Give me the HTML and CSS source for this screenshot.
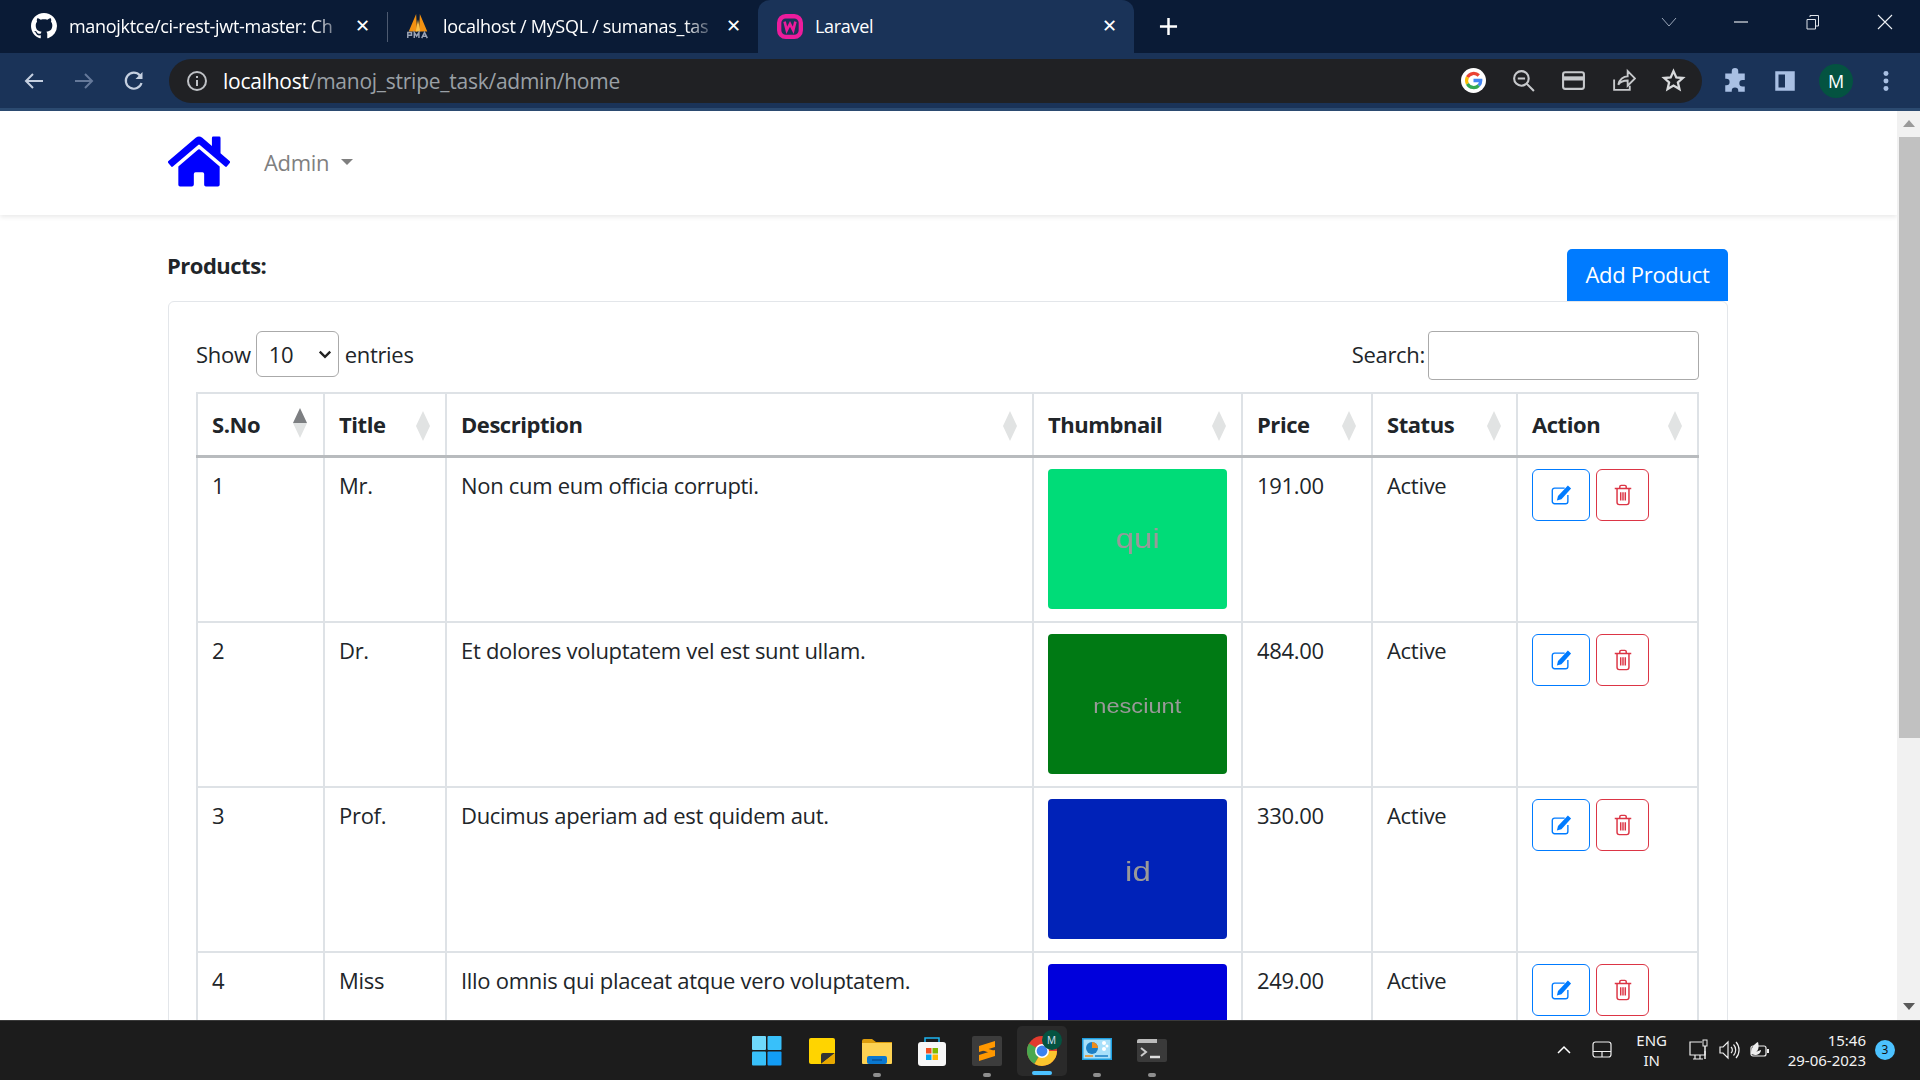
FILE: index.html
```html
<!DOCTYPE html>
<html lang="en">
<head>
    <meta charset="UTF-8">
    <title>Laravel</title>
    <link rel="stylesheet" href="styles.css">
</head>
<body>
<div class="screen">
    <!-- browser chrome -->
    <div class="tabstrip">
        <div class="tab">
            <svg class="tab-icon" viewBox="0 0 16 16"><path fill="#fff" d="M8 0C3.58 0 0 3.58 0 8c0 3.54 2.29 6.53 5.47 7.59.4.07.55-.17.55-.38 0-.19-.01-.82-.01-1.49-2.01.37-2.53-.49-2.69-.94-.09-.23-.48-.94-.82-1.13-.28-.15-.68-.52-.01-.53.63-.01 1.08.58 1.23.82.72 1.21 1.87.87 2.33.66.07-.52.28-.87.51-1.07-1.78-.2-3.64-.89-3.64-3.95 0-.87.31-1.59.82-2.15-.08-.2-.36-1.02.08-2.12 0 0 .67-.21 2.2.82.64-.18 1.32-.27 2-.27s1.36.09 2 .27c1.53-1.04 2.2-.82 2.2-.82.44 1.1.16 1.92.08 2.12.51.56.82 1.27.82 2.15 0 3.07-1.87 3.75-3.65 3.95.29.25.54.73.54 1.48 0 1.07-.01 1.93-.01 2.2 0 .21.15.46.55.38A8.01 8.01 0 0 0 16 8c0-4.42-3.58-8-8-8z"/></svg>
            <span class="tab-title">manojktce/ci-rest-jwt-master: Ch</span>
            <span class="tab-close">&#10005;</span>
        </div>
        <div class="tab tab-second">
            <svg class="tab-icon" viewBox="0 0 26 28"><path fill="#f29111" d="M3 20 11 1l1 19zM14 20 15 1l8 19z"/><path fill="#f8c04a" d="M10.500 20 13 7l2.500 13z"/><path fill="none" stroke="#9aa3b5" stroke-width="1.600" d="M2 27v-6h4v3H2M9 27v-6l2.500 4 2.500-4v6M17 27l3-6 3 6M18 25h4"/></svg>
            <span class="tab-title">localhost / MySQL / sumanas_tas</span>
            <span class="tab-close">&#10005;</span>
        </div>
        <div class="tab tab-active">
            <svg class="tab-icon" viewBox="0 0 24 24"><rect x="2" y="3" width="20" height="19" rx="6" fill="none" stroke="#ec1c9c" stroke-width="4"/><path fill="none" stroke="#ec1c9c" stroke-width="2.400" d="M7 8l2 8 3-6 3 6 2-8"/></svg>
            <span class="tab-title">Laravel</span>
            <span class="tab-close">&#10005;</span>
        </div>
        <svg class="new-tab" viewBox="0 0 20 20"><path stroke="#fff" stroke-width="2.600" d="M10 1v18M1 10h18"/></svg>
        <div class="win-controls">
            <svg viewBox="0 0 16 16"><path fill="none" stroke="#9aa6b8" d="M1 4l7 8 7-8"/></svg>
            <svg viewBox="0 0 16 16"><path stroke="#dfe4ea" stroke-width="1.200" d="M1 8h14"/></svg>
            <svg viewBox="0 0 16 16"><path fill="none" stroke="#dfe4ea" d="M2 5.500h8.500v9.500h-8.500zM5 3V1.500h8.500V12H11"/></svg>
            <svg viewBox="0 0 16 16"><path stroke="#eef1f5" stroke-width="1.100" d="M1 1l14 14M15 1 1 15"/></svg>
        </div>
    </div>
    <div class="toolbar">
        <div class="nav-buttons">
            <svg viewBox="0 0 24 24"><path fill="none" stroke="#c5d0e0" stroke-width="2" d="M21 12H4M11 5l-7 7 7 7"/></svg>
            <svg viewBox="0 0 24 24"><path fill="none" stroke="#65799a" stroke-width="2" d="M3 12h17M13 5l7 7-7 7"/></svg>
            <svg viewBox="0 0 24 24"><path fill="none" stroke="#c5d0e0" stroke-width="2.200" d="M19.500 14a8 8 0 1 1-1.600-7.500"/><path fill="#c5d0e0" d="M20.500 3v7h-7z"/></svg>
        </div>
        <div class="omnibox">
            <svg class="info-icon" viewBox="0 0 22 22"><circle cx="11" cy="11" r="9" fill="none" stroke="#bfc2c6" stroke-width="2"/><path stroke="#bfc2c6" stroke-width="2" d="M11 10v6M11 6v2"/></svg>
            <span class="url"><b>localhost</b>/manoj_stripe_task/admin/home</span>
            <div class="omni-actions">
                <svg viewBox="0 0 26 26"><circle cx="13" cy="13" r="13" fill="#fff"/><path fill="none" stroke="#ea4335" stroke-width="3.400" d="M6.700 9.500A7.500 7.500 0 0 1 18.500 7.800"/><path fill="none" stroke="#fbbc05" stroke-width="3.400" d="M6.700 9.500a7.500 7.500 0 0 0 0 7"/><path fill="none" stroke="#34a853" stroke-width="3.400" d="M6.700 16.500a7.500 7.500 0 0 0 11.800 1.700"/><path fill="none" stroke="#4285f4" stroke-width="3.400" d="M18.500 18.200A7.500 7.500 0 0 0 20.500 13H13"/></svg>
                <svg viewBox="0 0 24 24"><circle cx="10" cy="10" r="7" fill="none" stroke="#c7c9cc" stroke-width="2"/><path stroke="#c7c9cc" stroke-width="2" d="M15 15l7 7M6.500 10h7"/></svg>
                <svg viewBox="0 0 24 24"><rect x="2" y="4" width="20" height="16" rx="2" fill="none" stroke="#c7c9cc" stroke-width="2"/><path fill="#c7c9cc" d="M2 8h20v4H2z"/></svg>
                <svg viewBox="0 0 24 24"><path fill="none" stroke="#c7c9cc" stroke-width="1.800" d="M3 11v10h15v-4M7 16c1-5 5-8 9-8V3l7 7-7 7v-5c-4 0-7 1-9 4z"/></svg>
                <svg viewBox="0 0 24 24"><path fill="none" stroke="#d8dadc" stroke-width="2.200" d="M12 3l2.700 6 6.300.6-4.800 4.200 1.500 6.400L12 16.800 6.300 20.200l1.500-6.400L3 9.600 9.300 9z"/></svg>
            </div>
        </div>
        <div class="toolbar-actions">
            <svg viewBox="0 0 24 24"><path fill="#a9c0e3" d="M9 3a3 3 0 0 1 6 0v2h6v6h-2a3 3 0 0 0 0 6h2v5h-6v-1a3 3 0 0 0-6 0v1H3v-6h1a3 3 0 0 0 0-6H3V5h6z"/></svg>
            <svg viewBox="0 0 24 24"><path fill="#a9c0e3" fill-rule="evenodd" d="M3 3h18v18H3zM6 6v12h6V6z"/></svg>
            <span class="avatar">M</span>
            <svg viewBox="0 0 24 24"><g fill="#a9c0e3"><circle cx="12" cy="5" r="2.300"/><circle cx="12" cy="12" r="2.300"/><circle cx="12" cy="19" r="2.300"/></g></svg>
        </div>
    </div>

    <div class="viewport">
        <div class="content">
            <nav class="navbar">
                <svg class="home-icon" viewBox="0 0 576 512" preserveAspectRatio="none"><path fill="#0000ff" d="M280.400 148.300 96 300.100V464a16 16 0 0 0 16 16l112.100-.3a16 16 0 0 0 15.900-16V368a16 16 0 0 1 16-16h64a16 16 0 0 1 16 16v95.600a16 16 0 0 0 16 16.100L464 480a16 16 0 0 0 16-16V300L295.700 148.300a12.200 12.200 0 0 0-15.300 0zM571.600 251.500 488 182.600V44.100a12 12 0 0 0-12-12h-56a12 12 0 0 0-12 12v72.600L318.500 43a48 48 0 0 0-61 0L4.300 251.500a12 12 0 0 0-1.600 16.900l25.500 31A12 12 0 0 0 45.200 301l235.200-193.700a12.200 12.200 0 0 1 15.300 0L530.900 301a12 12 0 0 0 16.900-1.600l25.500-31a12 12 0 0 0-1.700-16.900z"/></svg>
                <span class="nav-link">Admin<i class="caret"></i></span>
            </nav>
            <main class="container">
                <div class="page-head">
                    <h1>Products:</h1>
                    <button class="btn-add">Add Product</button>
                </div>
                <div class="card">
                    <div class="table-controls">
                        <label>Show
                            <span class="fake-select">10
                                <svg viewBox="0 0 12 12"><path fill="none" stroke="#222" stroke-width="2" d="M1.500 4 6 8.500 10.500 4"/></svg>
                            </span>
                            entries</label>
                        <label>Search:<span class="fake-input"></span></label>
                    </div>
                    <table class="products">
                        <colgroup>
                            <col class="c-no"><col class="c-title"><col class="c-desc"><col class="c-thumb"><col class="c-price"><col class="c-status"><col class="c-action">
                        </colgroup>
                        <thead>
                            <tr>
                                <th class="sort-asc">S.No</th>
                                <th>Title</th>
                                <th>Description</th>
                                <th>Thumbnail</th>
                                <th>Price</th>
                                <th>Status</th>
                                <th>Action</th>
                            </tr>
                        </thead>
                        <tbody>
                            <tr>
                                <td>1</td><td>Mr.</td><td>Non cum eum officia corrupti.</td>
                                <td><div class="thumb thumb-green"><span class="size-md">qui</span></div></td>
                                <td>191.00</td><td>Active</td>
                                <td class="actions">
                                    <button class="icon-btn btn-edit"><svg viewBox="0 0 24 24"><use href="#ico-edit"/></svg></button>
                                    <button class="icon-btn btn-del"><svg viewBox="0 0 24 24"><use href="#ico-trash"/></svg></button>
                                </td>
                            </tr>
                            <tr>
                                <td>2</td><td>Dr.</td><td>Et dolores voluptatem vel est sunt ullam.</td>
                                <td><div class="thumb thumb-dkgreen"><span>nesciunt</span></div></td>
                                <td>484.00</td><td>Active</td>
                                <td class="actions">
                                    <button class="icon-btn btn-edit"><svg viewBox="0 0 24 24"><use href="#ico-edit"/></svg></button>
                                    <button class="icon-btn btn-del"><svg viewBox="0 0 24 24"><use href="#ico-trash"/></svg></button>
                                </td>
                            </tr>
                            <tr>
                                <td>3</td><td>Prof.</td><td>Ducimus aperiam ad est quidem aut.</td>
                                <td><div class="thumb thumb-blue"><span class="size-md">id</span></div></td>
                                <td>330.00</td><td>Active</td>
                                <td class="actions">
                                    <button class="icon-btn btn-edit"><svg viewBox="0 0 24 24"><use href="#ico-edit"/></svg></button>
                                    <button class="icon-btn btn-del"><svg viewBox="0 0 24 24"><use href="#ico-trash"/></svg></button>
                                </td>
                            </tr>
                            <tr>
                                <td>4</td><td>Miss</td><td>Illo omnis qui placeat atque vero voluptatem.</td>
                                <td><div class="thumb thumb-pure"></div></td>
                                <td>249.00</td><td>Active</td>
                                <td class="actions">
                                    <button class="icon-btn btn-edit"><svg viewBox="0 0 24 24"><use href="#ico-edit"/></svg></button>
                                    <button class="icon-btn btn-del"><svg viewBox="0 0 24 24"><use href="#ico-trash"/></svg></button>
                                </td>
                            </tr>
                        </tbody>
                    </table>
                </div>
            </main>
        </div>
        <div class="scrollbar">
            <span class="arrow-up"></span>
            <div class="scroll-track"><div class="scroll-thumb"></div></div>
            <span class="arrow-down"></span>
        </div>
    </div>

    <!-- windows taskbar -->
    <footer class="taskbar">
        <div class="task-icons">
            <span class="task-item">
                <svg viewBox="0 0 30 30"><g fill="#3cc2f5"><rect x="0" y="0" width="14" height="14" rx="1" fill="#6fd9fb"/><rect x="15.500" y="0" width="14" height="14" rx="1" fill="#38c0fa"/><rect x="0" y="15.500" width="14" height="14" rx="1" fill="#38c0fa"/><rect x="15.500" y="15.500" width="14" height="14" rx="1" fill="#129cf5"/></g></svg>
            </span>
            <span class="task-item">
                <svg viewBox="0 0 30 30"><rect x="2" y="2" width="26" height="26" rx="2" fill="#ffd400"/><path fill="#333" d="M14 28V19a2 2 0 0 1 2-2h12z"/><path fill="#e8a800" d="M28 17v9a2 2 0 0 1-2 2H14z"/></svg>
            </span>
            <span class="task-item running">
                <svg viewBox="0 0 30 30"><path fill="#dc9c0c" d="M0 5a2 2 0 0 1 2-2h8l4 3h16v4H0z"/><path fill="#fdd253" d="M0 7h30v20a1 1 0 0 1-1 1H1a1 1 0 0 1-1-1z"/><rect x="5" y="20" width="20" height="8" rx="2" fill="#0a78d0"/><path stroke="#063f7c" d="M10 24h10"/></svg>
            </span>
            <span class="task-item">
                <svg viewBox="0 0 30 30"><path fill="none" stroke="#1db4f0" stroke-width="1.500" d="M8 6V2h14v4"/><rect x="1" y="6" width="28" height="24" rx="3" fill="#f7f7f7"/><rect x="9" y="12" width="5.500" height="5.500" fill="#f25022"/><rect x="15.500" y="12" width="5.500" height="5.500" fill="#7fba00"/><rect x="9" y="18.500" width="5.500" height="5.500" fill="#00a4ef"/><rect x="15.500" y="18.500" width="5.500" height="5.500" fill="#ffb900"/></svg>
            </span>
            <span class="task-item running">
                <svg viewBox="0 0 30 30"><rect width="30" height="30" rx="2" fill="#3c3c3c"/><path fill="#ff9800" d="M23 5v6L7 16v-6zM23 14v6L7 25v-6z"/><path fill="#ff9800" d="M7 10l16 5-5 2-11-4z"/></svg>
            </span>
            <span class="task-item chrome-item">
                <svg viewBox="0 0 30 30"><circle cx="15" cy="15" r="15" fill="#e33b2e"/><path fill="#4aa84f" d="M15 15 7.500 28A15 15 0 0 1 2 7.500z"/><path fill="#fbc52d" d="M15 15h15a15 15 0 0 1-15 15 15 15 0 0 1-7.500-2z"/><circle cx="15" cy="15" r="7" fill="#fff"/><circle cx="15" cy="15" r="5.400" fill="#3b82f0"/></svg>
                <span class="chrome-badge">M</span>
            </span>
            <span class="task-item running">
                <svg viewBox="0 0 30 30"><rect y="2" width="30" height="22" fill="#1f9fe0"/><rect x="1.500" y="3.500" width="27" height="19" fill="#a8e0fa"/><circle cx="10" cy="12" r="6" fill="#1d7fc4"/><path fill="#f08c1a" d="M10 12V6a6 6 0 0 1 6 6z"/><g fill="#fff"><circle cx="22" cy="7" r="2"/><circle cx="22" cy="13" r="2"/><circle cx="25" cy="10" r="1.500"/></g><path stroke="#f08c1a" stroke-width="1.500" d="M3 20h8"/><path stroke="#1d7fc4" stroke-width="1.500" d="M13 20h13"/></svg>
            </span>
            <span class="task-item running">
                <svg viewBox="0 0 30 30"><rect y="3" width="30" height="23" rx="2" fill="#3a3a3a"/><path fill="#bbb" d="M2 3h18v4H0V5a2 2 0 0 1 2-2z"/><path fill="none" stroke="#ccc" stroke-width="2" d="M4 12l5 4-5 4"/><path stroke="#ddd" stroke-width="2.500" d="M13 21h10"/></svg>
            </span>
        </div>
        <div class="tray">
            <svg class="tray-chevron" viewBox="0 0 16 16"><path fill="none" stroke="#fff" stroke-width="1.500" d="M2 11l6-6 6 6"/></svg>
            <svg class="tray-touch" viewBox="0 0 20 18"><rect x="1" y="1" width="18" height="15" rx="2.500" fill="none" stroke="#eee" stroke-width="1.200"/><path stroke="#eee" stroke-width="1.200" d="M1 10.500h18M10 10.500V16"/></svg>
            <div class="tray-lang">ENG<br>IN</div>
            <svg class="tray-sm" viewBox="0 0 22 22"><path fill="none" stroke="#eee" stroke-width="1.200" d="M14 3H2v13h15v-4M7 16v4M12 16v4M5 20h10"/><rect x="15" y="1" width="4" height="6" fill="none" stroke="#eee"/><path stroke="#eee" stroke-width="1.500" d="M17 7v13"/></svg>
            <svg class="tray-sm" viewBox="0 0 22 22"><path fill="none" stroke="#eee" stroke-width="1.200" d="M2 8v6h3l5 5V3L5 8zM13 8a4 4 0 0 1 0 6M15.500 5.500a8 8 0 0 1 0 11M18 3a12 12 0 0 1 0 16"/></svg>
            <svg class="tray-sm" viewBox="0 0 22 22"><rect x="3" y="7" width="15" height="10" rx="2" fill="none" stroke="#eee" stroke-width="1.200"/><path fill="#eee" d="M19 10h2v4h-2zM3 15c0-6 3-10 7-12 1 4 1 8-2 10 2-1 4-2 5-2 0 3-3 5-6 5z"/></svg>
            <div class="tray-clock">15:46<br>29-06-2023</div>
            <span class="tray-badge">3</span>
        </div>
    </footer>
</div>

<svg class="icon-defs" xmlns="http://www.w3.org/2000/svg">
    <symbol id="ico-edit" viewBox="0 0 24 24">
        <path fill="none" stroke="currentColor" stroke-width="1.500" d="M16 4.500H5A2.500 2.500 0 0 0 2.500 7v12A2.500 2.500 0 0 0 5 21.500h12a2.500 2.500 0 0 0 2.500-2.500v-7"/>
        <path fill="currentColor" d="M19.500 1.500 23 5 12.500 16.500l-5 1.500 1.200-5z"/>
    </symbol>
    <symbol id="ico-trash" viewBox="0 0 24 24">
        <path fill="none" stroke="currentColor" stroke-width="1.600" d="M3 5h18M5.500 5v15a2.500 2.500 0 0 0 2.500 2.500h8a2.500 2.500 0 0 0 2.500-2.500V5M8.500 5V3a1.500 1.500 0 0 1 1.500-1.500h4A1.500 1.500 0 0 1 15.500 3v2M9.500 9v9M12 9v9M14.500 9v9"/>
    </symbol>
</svg>
</body>
</html>
```

FILE: styles.css
```css
* {
    box-sizing: border-box;
}
html, body {
    margin: 0;
    padding: 0;
}
body {
    font-family: "Open Sans", "Noto Sans", sans-serif;
    font-size: 22px;
    letter-spacing: -0.3px;
    color: #212529;
    background: #fff;
}
.screen {
    width: 1920px;
    height: 1080px;
    display: flex;
    flex-direction: column;
    overflow: hidden;
}
.icon-defs {
    display: none;
}

/* tabs */
.tabstrip {
    height: 53px;
    background: #0a1b36;
    display: flex;
    align-items: stretch;
    padding-left: 16px;
    flex-shrink: 0;
}
.tab {
    width: 371px;
    display: flex;
    align-items: center;
    padding: 0 14px 2px 15px;
    color: #fff;
    font-size: 18px;
    letter-spacing: -0.3px;
    position: relative;
}
.tab-second::before {
    content: "";
    position: absolute;
    left: 0;
    top: 12px;
    height: 30px;
    width: 1px;
    background: #4d5a70;
}
.tab-second {
    padding-left: 18px;
}
.tab-active {
    width: 376px;
    background: #1a3358;
    border-radius: 12px 12px 0 0;
    padding-left: 19px;
}
.tab-icon {
    width: 26px;
    height: 26px;
    flex-shrink: 0;
    margin-right: 12px;
}
.tab-title {
    flex: 1;
    white-space: nowrap;
    overflow: hidden;
    -webkit-mask-image: linear-gradient(to right, #000 88%, transparent 100%);
    mask-image: linear-gradient(to right, #000 88%, transparent 100%);
}
.tab-active .tab-title {
    -webkit-mask-image: none;
    mask-image: none;
}
.tab-close {
    font-size: 18px;
    width: 18px;
    margin-left: 8px;
    font-family: "DejaVu Sans", sans-serif;
    font-weight: bold;
}
.new-tab {
    width: 19px;
    height: 19px;
    margin: 17px 0 0 25px;
}
.win-controls {
    margin-left: auto;
    display: flex;
    gap: 56px;
    padding: 14px 27px 0 0;
}
.win-controls svg {
    width: 16px;
    height: 16px;
}

/* address bar */
.toolbar {
    height: 58px;
    background: #1a3358;
    border-bottom: 3px solid #2b4a70;
    display: flex;
    align-items: center;
    flex-shrink: 0;
}
.nav-buttons {
    width: 169px;
    display: flex;
    gap: 26px;
    padding-left: 22px;
}
.nav-buttons svg {
    width: 24px;
    height: 24px;
}
.omnibox {
    width: 1533px;
    height: 44px;
    background: #202124;
    border-radius: 22px;
    display: flex;
    align-items: center;
    padding: 0 16px 0 17px;
}
.info-icon {
    width: 22px;
    height: 22px;
    margin-right: 15px;
}
.url {
    color: #9aa0a6;
    font-size: 21px;
    letter-spacing: -0.25px;
}
.url b {
    font-weight: 400;
    color: #fff;
}
.omni-actions {
    margin-left: auto;
    display: flex;
    align-items: center;
    gap: 25px;
}
.omni-actions svg {
    width: 25px;
    height: 25px;
}
.toolbar-actions {
    display: flex;
    align-items: center;
    gap: 24px;
    padding-left: 20px;
}
.toolbar-actions svg {
    width: 26px;
    height: 26px;
}
.avatar {
    width: 34px;
    height: 34px;
    border-radius: 50%;
    background: #045341;
    color: #fff;
    font-size: 18px;
    display: flex;
    align-items: center;
    justify-content: center;
    margin: 0 -4px 0 -3px;
}

/* page */
.viewport {
    flex: 1;
    display: flex;
    min-height: 0;
}
.content {
    flex: 1;
    overflow: hidden;
}
.navbar {
    height: 104px;
    padding-left: 168px;
    display: flex;
    align-items: center;
    box-shadow: 0 2px 5px rgba(0, 0, 0, 0.09);
}
.home-icon {
    width: 62px;
    height: 57px;
    margin-top: -4px;
}
.nav-link {
    margin-left: 34px;
    padding-bottom: 2px;
    color: #7f7f7f;
    display: flex;
    align-items: center;
}
.caret {
    margin-left: 12px;
    border-top: 6px solid #7f7f7f;
    border-left: 6px solid transparent;
    border-right: 6px solid transparent;
}
.container {
    padding: 34px 169px 0 168px;
}
.page-head {
    display: flex;
    justify-content: space-between;
    align-items: flex-start;
}
.page-head h1 {
    margin: 0 0 0 -1px;
    font-size: 22px;
    font-weight: 700;
    letter-spacing: -0.5px;
    line-height: 32px;
}
.btn-add {
    width: 161px;
    height: 52px;
    background: #007bff;
    color: #fff;
    border: none;
    border-radius: 5px 5px 0 0;
    font: inherit;
    letter-spacing: inherit;
    padding: 0 0 2px;
}
.card {
    border: 1px solid #e3e6ea;
    border-radius: 6px;
    padding: 29px 28px 0 27px;
}
.table-controls {
    display: flex;
    justify-content: space-between;
    align-items: flex-start;
    height: 61px;
}
.table-controls label {
    display: flex;
    align-items: center;
    height: 46px;
}
.fake-select {
    width: 83px;
    height: 46px;
    margin: 0 6px 0 5px;
    align-self: flex-start;
    border: 1px solid #aaa;
    border-radius: 6px;
    display: flex;
    align-items: center;
    justify-content: space-between;
    padding: 0 6px 0 12px;
}
.fake-select svg {
    width: 14px;
    height: 14px;
}
.fake-input {
    width: 271px;
    height: 49px;
    margin-left: 3px;
    align-self: flex-start;
    border: 1px solid #aaa;
    border-radius: 4px;
}
.products {
    width: 100%;
    table-layout: fixed;
    border-collapse: collapse;
    border: 2px solid #dee2e6;
}
.c-no { width: 127px; }
.c-title { width: 122px; }
.c-desc { width: 587px; }
.c-thumb { width: 209px; }
.c-price { width: 130px; }
.c-status { width: 145px; }
.products th, .products td {
    border: 2px solid #dee2e6;
    padding: 11px 14px 12px;
    vertical-align: top;
    text-align: left;
    font-weight: 400;
    line-height: 33px;
}
.products th {
    height: 63px;
    padding: 12px 14px;
    font-weight: 700;
    letter-spacing: -0.45px;
    vertical-align: middle;
    border-bottom: 3px solid #b8bbbe;
    position: relative;
}
.products th::before, .products th::after {
    content: "";
    position: absolute;
    right: 15px;
    border-left: 7px solid transparent;
    border-right: 7px solid transparent;
}
.products th::before {
    top: 17px;
    border-bottom: 15px solid #e1e3e3;
}
.products th::after {
    top: 32px;
    border-top: 15px solid #e1e3e3;
}
.products th.sort-asc::before {
    border-bottom-color: #7d7f82;
    right: 16px;
    top: 14px;
}
.products th.sort-asc::after {
    right: 16px;
    top: 29px;
}
.thumb {
    width: 179px;
    height: 140px;
    border-radius: 4px;
    display: flex;
    align-items: center;
    justify-content: center;
    font-family: "Liberation Sans", sans-serif;
    font-size: 20px;
    letter-spacing: 0;
    color: #999;
}
.thumb span {
    transform: scaleX(1.18);
}
.size-md {
    font-size: 28px;
}
.thumb-green { background: #00dc78; }
.thumb-dkgreen { background: #007a14; padding-top: 5px; }
.thumb-blue { background: #0022b8; padding-top: 6px; }
.thumb-pure { background: #0000dc; }
.actions {
    white-space: nowrap;
}
.icon-btn {
    height: 52px;
    background: #fff;
    border: 1px solid;
    border-radius: 6px;
    padding: 0;
    vertical-align: top;
    display: inline-flex;
    align-items: center;
    justify-content: center;
}
.icon-btn svg {
    width: 22px;
    height: 22px;
}
.btn-edit {
    width: 58px;
    margin-right: 1px;
    color: #007bff;
}
.btn-del {
    width: 53px;
    color: #dc3545;
}

/* scrollbar */
.scrollbar {
    width: 23px;
    background: #f1f1f1;
    display: flex;
    flex-direction: column;
    align-items: center;
}
.arrow-up, .arrow-down {
    flex-shrink: 0;
    margin-top: 9px;
    border-left: 6px solid transparent;
    border-right: 6px solid transparent;
    height: 0;
}
.arrow-up {
    border-bottom: 7px solid #9a9a9a;
}
.arrow-down {
    border-top: 7px solid #5a5a5a;
    margin: 0 0 10px;
}
.scroll-track {
    flex: 1;
    width: 100%;
    padding: 10px 0 0 2px;
}
.scroll-thumb {
    height: 601px;
    background: #c1c1c1;
}

/* taskbar */
.taskbar {
    height: 60px;
    background: #1c1c1c;
    border-top: 1px solid #3a3a3a;
    flex-shrink: 0;
    position: relative;
    display: flex;
    align-items: center;
    justify-content: center;
    font-family: "Noto Sans", sans-serif;
    letter-spacing: 0;
    color: #f2f2f2;
}
.task-icons {
    display: flex;
    align-items: center;
    margin-left: -2px;
}
.task-item {
    width: 55px;
    height: 58px;
    display: flex;
    align-items: center;
    justify-content: center;
    position: relative;
}
.task-item svg {
    width: 30px;
    height: 30px;
}
.running::after {
    content: "";
    position: absolute;
    bottom: 3px;
    left: 24px;
    width: 8px;
    height: 4px;
    border-radius: 2px;
    background: #8e8e8e;
}
.chrome-item {
    width: 50px;
    height: 50px;
    margin: 0 2.5px;
    background: #2a2a2a;
    border-radius: 5px;
}
.chrome-item::after {
    content: "";
    position: absolute;
    bottom: 1px;
    left: 15px;
    width: 20px;
    height: 4px;
    border-radius: 2px;
    background: #4cc2ff;
}
.chrome-badge {
    position: absolute;
    top: 4px;
    right: 5px;
    width: 20px;
    height: 20px;
    border-radius: 50%;
    background: #045341;
    color: #cde;
    font-size: 10px;
    text-align: center;
    line-height: 20px;
}
.tray {
    position: absolute;
    right: 0;
    top: 0;
    height: 57px;
    display: flex;
    align-items: center;
    font-size: 15px;
    line-height: 20px;
    padding-right: 25px;
}
.tray-chevron {
    width: 16px;
    height: 16px;
    margin-right: 20px;
}
.tray-touch {
    width: 20px;
    height: 18px;
    margin-right: 15px;
}
.tray-lang {
    text-align: center;
    width: 50px;
    margin-right: 11px;
}
.tray-sm {
    width: 22px;
    height: 22px;
    margin-right: 8px;
}
.tray-clock {
    text-align: right;
    margin-left: 10px;
}
.tray-badge {
    width: 20px;
    height: 20px;
    border-radius: 50%;
    background: #4cc2ff;
    color: #111;
    font-size: 12px;
    text-align: center;
    line-height: 20px;
    margin-left: 9px;
}
```
